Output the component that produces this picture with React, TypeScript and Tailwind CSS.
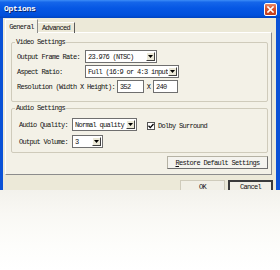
import React from "react";

function Arrow() {
  return (
    <svg width="5" height="3" viewBox="0 0 5 3">
      <path d="M0 0h5L2.5 3z" fill="#000" />
    </svg>
  );
}

function Select({ text, className }: { text: string; className: string }) {
  return (
    <div className={"h-[13px] bg-white border border-[#6f6f6f] flex items-center pl-[2px] pr-[1px] overflow-hidden " + className}>
      <span className="flex-1 whitespace-nowrap overflow-hidden">{text}</span>
      <div className="w-[9px] h-[9px] shrink-0 bg-[#ECE9D8] border-t border-l border-t-white border-l-white border-b border-r border-b-[#404040] border-r-[#404040] flex items-center justify-center">
        <Arrow />
      </div>
    </div>
  );
}

function Input({ text, className }: { text: string; className: string }) {
  return (
    <div className={"h-[13px] bg-white border border-[#6f6f6f] flex items-center pl-[2px] " + className}>
      {text}
    </div>
  );
}

export default function App() {
  return (
    <div className="w-[280px] h-[270px] bg-white overflow-hidden font-['Liberation_Mono',monospace] text-[7px] leading-[8px] tracking-[-0.7px] text-[#111]">
      <div className="h-[190px] overflow-hidden flex flex-col bg-[#0b52d6]">
        {/* title bar */}
        <div className="h-[18px] shrink-0 flex items-center justify-between pl-[4px] pr-[3px] bg-[linear-gradient(to_bottom,#3d8df7_0%,#1566ea_12%,#0657e4_45%,#0050dc_85%,#0044c0_100%)]">
          <span className="text-white font-bold text-[8px] tracking-[-0.3px] [text-shadow:1px_1px_0_#0a246a]">Options</span>
          <div className="w-[13px] h-[13px] rounded-[2px] border border-white bg-[linear-gradient(to_bottom,#e88a6a,#d9542f_40%,#c23d1c)] flex items-center justify-center">
            <svg width="7" height="7" viewBox="0 0 7 7">
              <path d="M1 1L6 6M6 1L1 6" stroke="#fff" strokeWidth="1.6" strokeLinecap="square" />
            </svg>
          </div>
        </div>
        {/* body */}
        <div className="flex-1 flex pl-[3px] pr-[4px]">
          <div className="flex-1 bg-[#ECE9D8] flex flex-col">
            {/* tabs */}
            <div className="flex items-end pl-[2px] pt-[1px] h-[15px] -mb-px relative z-10">
              <div className="w-[33px] h-[14px] bg-[#F3F1E7] border border-[#8c8c8c] border-b-0 border-t-white border-l-white flex items-center justify-center">
                General
              </div>
              <div className="w-[37px] h-[11px] border-t border-r border-t-white border-r-[#5a5a5a] flex items-center justify-center">
                Advanced
              </div>
            </div>
            {/* panel */}
            <div className="ml-[2px] mr-[4px] h-[143px] bg-[#F3F1E7] border border-[#8c8c8c] border-t-white border-l-white pl-[5px] pr-[3px] flex flex-col">
              {/* video group */}
              <div className="mt-[9px] border border-[#cfcbbb] rounded-[2px] pl-[5px] pb-[8px] flex flex-col">
                <span className="-mt-[5px] ml-[-2px] px-[1px] w-fit bg-[#F3F1E7] h-[8px]">Video Settings</span>
                <div className="mt-[4px] flex flex-col gap-[2px]">
                  <div className="flex items-center h-[13px]">
                    <span className="w-[68px]">Output Frame Rate:</span>
                    <Select text="23.976 (NTSC)" className="w-[72px]" />
                  </div>
                  <div className="flex items-center h-[13px]">
                    <span className="w-[68px]">Aspect Ratio:</span>
                    <Select text="Full (16:9 or 4:3 input" className="w-[94px]" />
                  </div>
                  <div className="flex items-center h-[13px]">
                    <span className="w-[100px]">Resolution (Width X Height):</span>
                    <Input text="352" className="w-[27px]" />
                    <span className="w-[9px] text-center">X</span>
                    <Input text="240" className="w-[25px]" />
                  </div>
                </div>
              </div>
              {/* audio group */}
              <div className="mt-[6px] border border-[#cfcbbb] rounded-[2px] pl-[7px] pb-[4px] flex flex-col">
                <span className="-mt-[5px] ml-[-4px] px-[1px] w-fit bg-[#F3F1E7] h-[8px]">Audio Settings</span>
                <div className="mt-[6px] flex flex-col gap-[4px]">
                  <div className="flex items-center h-[13px]">
                    <span className="w-[53px]">Audio Quality:</span>
                    <Select text="Normal quality" className="w-[65px]" />
                    <div className="ml-[10px] mt-[3px] flex items-center gap-[3px]">
                      <div className="w-[8px] h-[8px] bg-white border border-[#555] flex items-center justify-center">
                        <svg width="6" height="6" viewBox="0 0 6 6">
                          <path d="M0.5 2.8L2.3 4.6L5.5 1" stroke="#000" strokeWidth="1.3" fill="none" />
                        </svg>
                      </div>
                      <span>Dolby Surround</span>
                    </div>
                  </div>
                  <div className="flex items-center h-[13px]">
                    <span className="w-[53px]">Output Volume:</span>
                    <Select text="3" className="w-[31px]" />
                  </div>
                </div>
              </div>
              {/* restore */}
              <div className="mt-[3px] self-end w-[101px] h-[13px] bg-[#F4F3EE] border border-[#b5b2a4] border-b-[#6e6e6e] border-r-[#6e6e6e] flex items-center justify-center">
                <span><span className="underline">R</span>estore Default Settings</span>
              </div>
            </div>
            {/* ok cancel */}
            <div className="mt-[5px] flex justify-end gap-[3px] pr-[3px]">
              <div className="w-[45px] h-[14px] bg-[#F1EFE6] border border-[#cfcbbb] flex items-center justify-center">OK</div>
              <div className="w-[45px] h-[14px] bg-[#F1EFE6] border-2 border-[#3a3a3a] flex items-center justify-center">Cancel</div>
            </div>
          </div>
        </div>
      </div>
      <div className="h-[80px] bg-[linear-gradient(to_bottom,#f3f2ec,#f9f8f4_30%,#fdfdfb_70%,#ffffff)]" />
    </div>
  );
}
